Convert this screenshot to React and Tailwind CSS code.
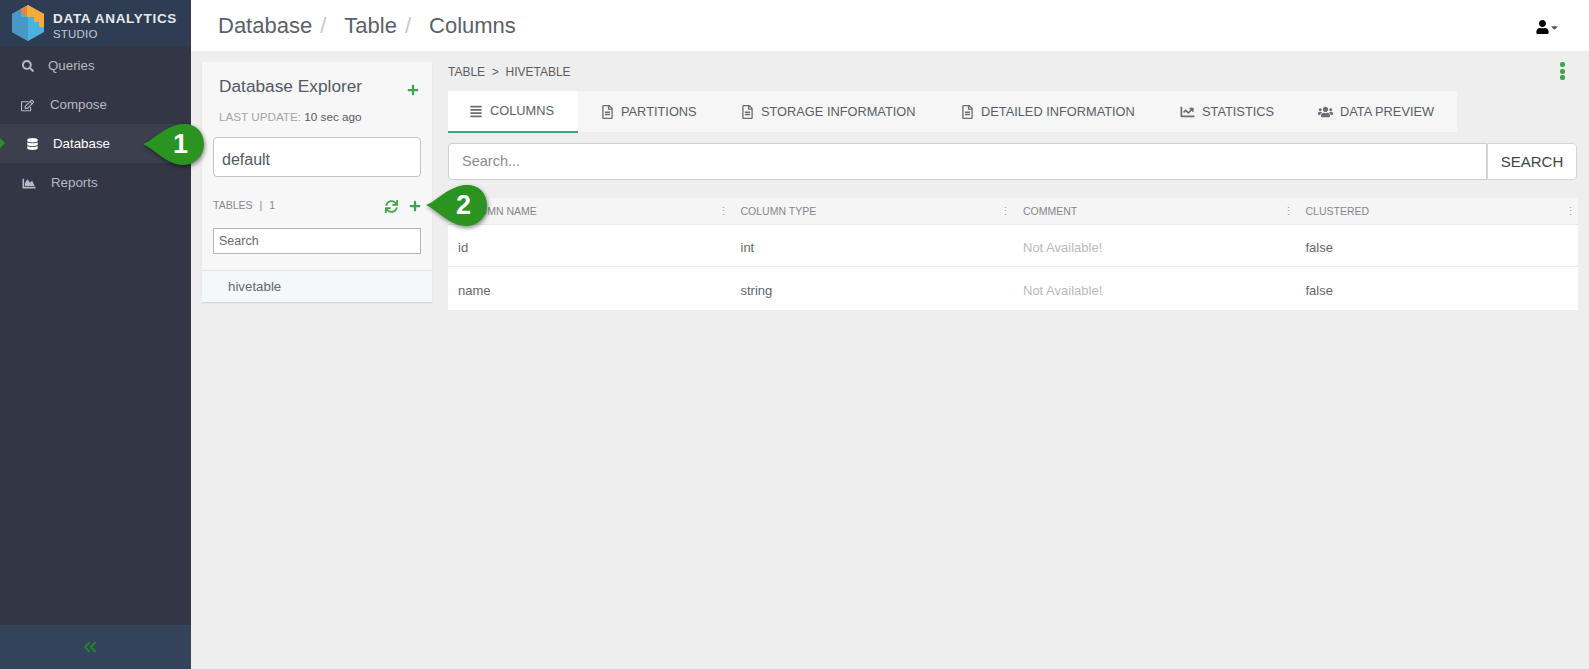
import React from 'react';
import { FaSearch, FaRegEdit, FaDatabase, FaChartArea, FaUser, FaCaretDown, FaPlus, FaSync, FaAlignJustify, FaRegFileAlt, FaChartLine, FaUsers } from 'react-icons/fa';
import { ChevronsLeft } from 'lucide-react';

const navItems = [
  { label: 'Queries', icon: FaSearch, iconClass: 'ml-[22px] mr-[14px] w-[12px] h-[12px]' },
  { label: 'Compose', icon: FaRegEdit, iconClass: 'ml-[21px] mr-[16px] w-[13px] h-[13px]' },
  { label: 'Database', icon: FaDatabase, iconClass: 'ml-[27px] mr-[15px] w-[11px] h-[12px] text-white', active: true },
  { label: 'Reports', icon: FaChartArea, iconClass: 'ml-[21px] mr-[14px] w-[16px] h-[13px]' },
];

const tabs = [
  { label: 'COLUMNS', icon: FaAlignJustify, width: 'w-[130px] pl-[21px]', iconClass: 'w-[14px] h-[13px]', active: true },
  { label: 'PARTITIONS', icon: FaRegFileAlt, width: 'w-[142px] pl-[23px]', iconClass: 'w-[13px] h-[14px]' },
  { label: 'STORAGE INFORMATION', icon: FaRegFileAlt, width: 'w-[220px] pl-[21px]', iconClass: 'w-[13px] h-[14px]' },
  { label: 'DETAILED INFORMATION', icon: FaRegFileAlt, width: 'w-[219px] pl-[21px]', iconClass: 'w-[13px] h-[14px]' },
  { label: 'STATISTICS', icon: FaChartLine, width: 'w-[138px] pl-[21px]', iconClass: 'w-[15px] h-[14px]' },
  { label: 'DATA PREVIEW', icon: FaUsers, width: 'w-[160px] pl-[21px]', iconClass: 'w-[15px] h-[14px]' },
];

const columns = ['COLUMN NAME', 'COLUMN TYPE', 'COMMENT', 'CLUSTERED'];
const rows = [['id', 'int'], ['name', 'string']];

function Callout({ n, className }) {
  return (
    <div className={`absolute w-[62px] h-[44px] ${className}`}>
      <svg viewBox="0 0 62 44" className="w-full h-full drop-shadow-[1px_2px_2px_rgba(0,0,0,0.45)]">
        <path d="M0 21 C10 18 22 2 40 1 C53 0 61 10 61 21 C61 33 52 42 40 42 C24 42 10 25 0 21 Z" fill="#2b9420" />
      </svg>
      <span className="absolute right-[17px] top-[2px] text-[27px] leading-[38px] font-bold text-white">{n}</span>
    </div>
  );
}

function Logo() {
  return (
    <svg viewBox="0 0 32 36" className="w-[32px] h-[36px] ml-[12px] shrink-0">
      <path d="M16 0 L32 9 V27 L16 36 L0 27 V9 Z" fill="#4ab3e0" />
      <path d="M0 9 L9 4 V12 L16 12 V36 L0 27 Z" fill="#4a97c6" />
      <path d="M9 4 L16 0 L32 9 V22 L27 22 V17 L22 17 V12 L15 12 V8 L9 8 Z" fill="#f5aa3c" />
      <path d="M9 4 L15 1 V11 L9 8 Z" fill="#e8833a" />
    </svg>
  );
}

function Sidebar() {
  return (
    <aside className="w-[191px] shrink-0 bg-[#323645] flex flex-col">
      <div className="h-[46px] bg-[#2e3d54] flex items-center">
        <Logo />
        <div className="ml-[9px] mt-[6px]">
          <div className="text-[13.5px] leading-[15px] font-bold tracking-[0.7px] text-[#e8e8ea]">DATA ANALYTICS</div>
          <div className="text-[11.5px] leading-[16px] tracking-[0.2px] text-[#c5c9d0]">STUDIO</div>
        </div>
      </div>
      <nav className="flex-1">
        {navItems.map(item => {
          const Icon = item.icon;
          return (
            <div
              key={item.label}
              className={`relative h-[39px] pt-[1px] flex items-center text-[13.3px] ${item.active ? 'bg-[#3b3f4e] text-white' : 'text-[#b7bac2]'}`}
            >
              {item.active && <div className="absolute left-0 top-[14px] w-0 h-0 border-y-[5px] border-y-transparent border-l-[5px] border-l-[#2b9420]" />}
              <Icon className={item.iconClass} />
              <span>{item.label}</span>
            </div>
          );
        })}
      </nav>
      <div className="h-[44px] bg-[#33435a] flex items-center justify-center">
        <ChevronsLeft className="w-[20px] h-[20px] mr-[12px] text-[#23852a]" strokeWidth={2.5} />
      </div>
    </aside>
  );
}

function Explorer() {
  return (
    <div className="w-[230px] shrink-0 self-start bg-[#f7f7f7] shadow-[0_1px_1px_rgba(0,0,0,0.1)] flex flex-col">
      <div className="flex justify-between px-[17px] pt-[13px]">
        <span className="text-[17.3px] leading-[22px] text-[#555a63]">Database Explorer</span>
        <FaPlus className="w-[12px] h-[12px] mt-[9px] mr-[-4px] text-[#3ca64c]" />
      </div>
      <div className="px-[17px] mt-[13px] text-[11.7px] leading-[14px] text-[#a4a6aa]">
        LAST UPDATE: <span className="text-[#555a63]">10 sec ago</span>
      </div>
      <div className="mx-[11px] mt-[13px] h-[40px] border border-[#c4c4c4] rounded-[4px] bg-white flex items-center px-[8px] pt-[5px] text-[16px] text-[#555a63]">default</div>
      <div className="flex items-center justify-between mx-[11px] mt-[21px] h-[16px]">
        <span className="flex gap-[7px] text-[10.5px] text-[#85888d]">
          <span>TABLES</span><span>|</span><span>1</span>
        </span>
        <div className="flex items-center gap-[11px]">
          <FaSync className="w-[13px] h-[13px] text-[#3ca64c]" />
          <FaPlus className="w-[12px] h-[12px] text-[#3ca64c]" />
        </div>
      </div>
      <div className="mx-[11px] mt-[14px] h-[26px] border border-[#b5b5b5] bg-white flex items-center px-[5px] text-[12.5px] text-[#666a70]">Search</div>
      <div className="mt-[16px] h-[32px] bg-[#f4f8fb] border-t border-[#e2e4e6] flex items-center pl-[26px] text-[13.3px] text-[#666a70]">hivetable</div>
    </div>
  );
}

function TableDetail() {
  return (
    <div className="flex-1 min-w-0 ml-[16px] mr-[11px]">
      <div className="flex justify-between items-start h-[29px] pt-[2px]">
        <span className="text-[12px] leading-[17px] text-[#5d5d5f]">TABLE &nbsp;&gt;&nbsp; HIVETABLE</span>
        <div className="flex flex-col gap-[1.5px] mr-[13px] mt-[-2px]">
          <i className="block w-[5px] h-[5px] rounded-[2px] bg-[#3ca64c]" />
          <i className="block w-[5px] h-[5px] rounded-[2px] bg-[#3ca64c]" />
          <i className="block w-[5px] h-[5px] rounded-[2px] bg-[#3ca64c]" />
        </div>
      </div>
      <div className="flex items-start w-[1009px] h-[41px] bg-[#f6f6f6]">
        {tabs.map(tab => {
          const Icon = tab.icon;
          return (
            <div
              key={tab.label}
              className={`${tab.width} shrink-0 flex items-center gap-[7px] text-[12.8px] text-[#5a5e66] ${tab.active ? 'h-[42px] bg-white border-b-2 border-[#3fa57a]' : 'h-[41px]'}`}
            >
              <Icon className={`${tab.iconClass} text-[#6a6d73]`} />
              <span>{tab.label}</span>
            </div>
          );
        })}
      </div>
      <div className="flex mt-[11px] h-[37px] pr-[1px]">
        <div className="flex-1 bg-white border border-[#cfcfcf] rounded-l-[4px] flex items-center px-[13px] pt-[1px] text-[14.5px] text-[#8a8c90]">Search...</div>
        <div className="w-[90px] bg-white border border-[#d6d6d6] rounded-r-[4px] flex items-center justify-center pt-[1px] text-[15px] text-[#444]">SEARCH</div>
      </div>
      <div className="mt-[18px] bg-white">
        <div className="grid grid-cols-4 h-[27px] bg-[#f5f5f5] border-b border-[#e9e9e9]">
          {columns.map(col => (
            <div key={col} className="flex items-center justify-between pl-[10px] pr-[2px] pt-[1px] text-[10.5px] text-[#85878b]">
              <span>{col}</span>
              <span className="text-[11px] text-[#a0a0a0]">⋮</span>
            </div>
          ))}
        </div>
        {rows.map((row, i) => (
          <div key={row[0]} className={`grid grid-cols-4 pt-[5px] text-[13px] text-[#65686e] ${i === 0 ? 'h-[42px] border-b border-[#ececec]' : 'h-[43px]'}`}>
            <div className="flex items-center pl-[10px]">{row[0]}</div>
            <div className="flex items-center pl-[10px]">{row[1]}</div>
            <div className="flex items-center pl-[10px] text-[#b9babd]">Not Available!</div>
            <div className="flex items-center pl-[10px]">false</div>
          </div>
        ))}
      </div>
    </div>
  );
}

export default function App() {
  return (
    <div className="relative flex w-[1589px] h-[669px] overflow-hidden bg-[#eeeeee] font-['Liberation_Sans',sans-serif]">
      <Sidebar />
      <div className="flex-1 min-w-0 flex flex-col">
        <header className="h-[51px] bg-white flex items-center justify-between pl-[27px] pr-[29px] shrink-0">
          <div className="text-[22px] text-[#5b5f69]">
            Database<span className="text-[#c8c8c8] ml-[8px] mr-[18px]">/</span>
            Table<span className="text-[#c8c8c8] ml-[8px] mr-[18px]">/</span>
            Columns
          </div>
          <div className="flex items-center mt-[3px]">
            <FaUser className="w-[13px] h-[14px] text-black" />
            <FaCaretDown className="w-[11px] h-[11px] text-[#555]" />
          </div>
        </header>
        <main className="flex-1 flex pt-[11px] pl-[11px]">
          <Explorer />
          <TableDetail />
        </main>
      </div>
      <Callout n="1" className="left-[143px] top-[123px]" />
      <Callout n="2" className="left-[426px] top-[184px]" />
    </div>
  );
}
